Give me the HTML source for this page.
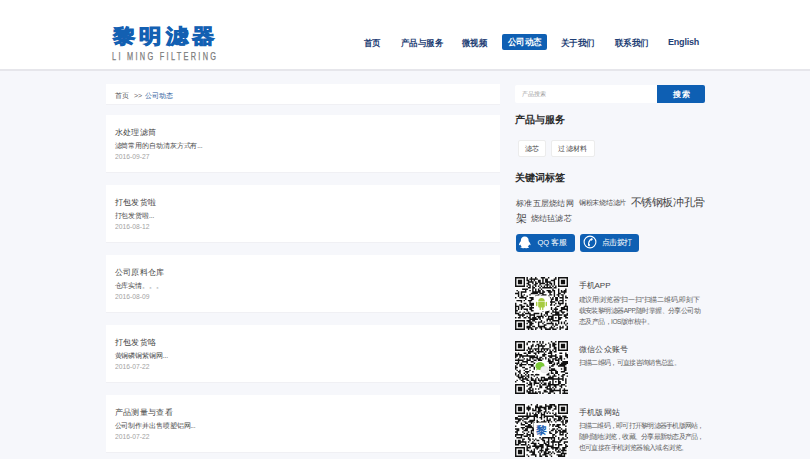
<!DOCTYPE html>
<html><head><meta charset="utf-8">
<style>
*{margin:0;padding:0;box-sizing:border-box}
html,body{width:810px;height:459px;overflow:hidden}
body{background:#f6f7fb;font-family:"Liberation Sans",sans-serif;position:relative;color:#333}
.a{position:absolute;white-space:nowrap;line-height:1}
#hdr{position:absolute;left:0;top:0;width:810px;height:71px;background:#fff;border-bottom:2px solid #e6e6eb}
.logo{left:113px;top:25.5px;font-size:20px;font-weight:bold;color:#1360b2;letter-spacing:3.6px;-webkit-text-stroke:0.9px #1360b2;transform:scaleX(1.12);transform-origin:0 0}
.logosub{left:112px;top:51.5px;font-size:10.2px;color:#7c7c7c;-webkit-text-stroke:0.25px #7c7c7c;letter-spacing:3.2px;transform:scaleX(0.72);transform-origin:0 0}
.nav{top:38.5px;font-size:9px;font-weight:bold;color:#1f3f75;transform:scaleX(0.94);transform-origin:0 0}
.navon{position:absolute;left:502px;top:34px;width:45px;height:16px;background:#0e5fb3;border-radius:2px}
.navon span{position:absolute;left:5.5px;top:4px;font-size:9px;font-weight:bold;color:#fff;line-height:1;white-space:nowrap;transform:scaleX(0.94);transform-origin:0 0}
.card{position:absolute;left:106px;width:394px;background:#fff;box-shadow:0 1px 0 #f0f0f4}
.t{left:8.5px;font-size:8px;color:#444;letter-spacing:0.4px}
.d{left:8.5px;font-size:6.5px;color:#4a4a4a;letter-spacing:-0.1px}
.dt{left:8.5px;font-size:8px;color:#a3a3a3;transform:scaleX(0.84);transform-origin:0 0}
.side{color:#333}
.h{font-size:10px;font-weight:bold;color:#2a2a2a}
.tag{position:absolute;top:140px;height:17px;background:#fff;border:1px solid #ececec;border-radius:2px;font-size:7px;color:#444;line-height:15px;text-align:center;letter-spacing:0.3px}
.btn{position:absolute;top:233.5px;width:59px;height:18px;background:#0e5fb3;border-radius:3px}
.qr{position:absolute;left:515px;width:53px;height:53px;background:#fff}
.qt{left:578.5px;font-size:8px;color:#444}
.qd{left:578.5px;font-size:6.5px;color:#5e5e5e;line-height:11px;letter-spacing:-0.2px}
</style></head><body>
<div id="hdr"></div>
<div class="a logo">黎明滤器</div>
<div class="a logosub">LI MING FILTERING</div>
<div class="a nav" style="left:364px">首页</div>
<div class="a nav" style="left:401px">产品与服务</div>
<div class="a nav" style="left:462px">微视频</div>
<div class="navon"><span>公司动态</span></div>
<div class="a nav" style="left:561px">关于我们</div>
<div class="a nav" style="left:615px">联系我们</div>
<div class="a nav" style="left:668px;top:37.5px;font-size:9px;letter-spacing:-0.2px;transform:none">English</div>

<div class="card" style="top:84px;height:20px">
  <div class="a" style="left:8.5px;top:7.5px;font-size:7px;color:#555">首页</div><div class="a" style="left:28px;top:7.5px;font-size:7px;color:#666">&gt;&gt;</div><div class="a" style="left:38.5px;top:7.5px;font-size:7px;color:#2b5b9c;letter-spacing:0.3px">公司动态</div>
</div>

<div class="card" style="top:115px;height:57px">
  <div class="a t" style="top:13.5px">水处理滤筒</div>
  <div class="a d" style="top:28px">滤筒常用的自动清灰方式有...</div>
  <div class="a dt" style="top:37.8px">2016-09-27</div>
</div>
<div class="card" style="top:185px;height:57px">
  <div class="a t" style="top:13.5px">打包发货啦</div>
  <div class="a d" style="top:28px">打包发货啦...</div>
  <div class="a dt" style="top:37.8px">2016-08-12</div>
</div>
<div class="card" style="top:255px;height:57px">
  <div class="a t" style="top:13.5px">公司原料仓库</div>
  <div class="a d" style="top:28px">仓库实情。。。</div>
  <div class="a dt" style="top:37.8px">2016-08-09</div>
</div>
<div class="card" style="top:325px;height:57px">
  <div class="a t" style="top:13.5px">打包发货咯</div>
  <div class="a d" style="top:28px">黄铜磷铜紫铜网...</div>
  <div class="a dt" style="top:37.8px">2016-07-22</div>
</div>
<div class="card" style="top:395px;height:57px">
  <div class="a t" style="top:13.5px">产品测量与查看</div>
  <div class="a d" style="top:28px">公司制作并出售喷塑铝网...</div>
  <div class="a dt" style="top:37.8px">2016-07-22</div>
</div>

<!-- sidebar -->
<div style="position:absolute;left:515px;top:85px;width:142px;height:18px;background:#fff;border-radius:2px 0 0 2px"></div>
<div class="a" style="left:522px;top:91px;font-size:6px;color:#999">产品搜索</div>
<div style="position:absolute;left:657px;top:85px;width:48px;height:18px;background:#0e5fb3;border-radius:0 2px 2px 0"></div>
<div class="a" style="left:672.5px;top:90.5px;font-size:8px;font-weight:bold;color:#fff;letter-spacing:1.5px">搜索</div>

<div class="a h" style="left:515px;top:114.5px">产品与服务</div>
<div class="tag" style="left:518px;width:28px">滤芯</div>
<div class="tag" style="left:551px;width:44px">过滤材料</div>
<div class="a h" style="left:515px;top:172.5px">关键词标签</div>
<div class="a" style="left:516px;top:200px;font-size:8px;color:#484848;letter-spacing:0.3px">标准五层烧结网</div>
<div class="a" style="left:579px;top:200px;font-size:6.5px;color:#484848;letter-spacing:-0.3px">铜粉末烧结滤片</div>
<div class="a" style="left:630.5px;top:197px;font-size:10.5px;color:#444;letter-spacing:-0.4px">不锈钢板冲孔骨</div>
<div class="a" style="left:516px;top:212.5px;font-size:10.5px;color:#444">架</div>
<div class="a" style="left:530.5px;top:215px;font-size:8px;color:#484848;letter-spacing:0.3px">烧结毡滤芯</div>

<div class="btn" style="left:516px"></div>
<svg style="position:absolute;left:518px;top:236px" width="13.5" height="12.5" viewBox="0 0 14 15" preserveAspectRatio="none"><path fill="#fff" d="M7 0.5C4.3 0.5 3 2.6 3 5c0 .6 0 1-.3 1.5C1.8 7.8 1 9.2 1 10.5c0 .5.3.7.8.3l.6-.7c.3 1 .8 1.9 1.5 2.5-.8.3-1.4.8-1.2 1.3.2.6 1.6.8 3 .7l1.3-.2 1.3.2c1.4.1 2.8-.1 3-.7.2-.5-.4-1-1.2-1.3.7-.6 1.2-1.5 1.5-2.5l.6.7c.5.4.8.2.8-.3 0-1.3-.8-2.7-1.7-4C11 6 11 5.600 11 5c0-2.4-1.300-4.5-4-4.5z"/></svg>
<div class="a" style="left:537.5px;top:239px;font-size:7.5px;color:#fff">QQ 客服</div>
<div class="btn" style="left:580px"></div>
<svg style="position:absolute;left:582.5px;top:235px" width="14" height="14" viewBox="0 0 14 14"><circle cx="7" cy="7" r="5.9" fill="none" stroke="#fff" stroke-width="1.1"/><path fill="#fff" d="M8.6 2.9L10 4 8.7 5.7 7.8 5.3C6.9 6.3 6.3 7.700 6.200 9.100L7.100 9.500 6.600 11.300 5.200 11C4.400 8 5.600 4.700 8.600 2.900Z"/></svg>
<div class="a" style="left:601.5px;top:239px;font-size:7.5px;color:#fff;letter-spacing:-0.4px">点击拨打</div>

<div class="qr" style="top:277px"><svg width="53" height="53" viewBox="0 0 37 37" style="position:absolute;left:0;top:0"><rect width="37" height="37" fill="#fff"/><path fill="#111" d="M0 0h7v1h-7zM8 0h1v1h-1zM11 0h1v1h-1zM14 0h1v1h-1zM18 0h3v1h-3zM23 0h1v1h-1zM28 0h1v1h-1zM30 0h7v1h-7zM0 1h1v1h-1zM6 1h1v1h-1zM8 1h1v1h-1zM10 1h6v1h-6zM19 1h1v1h-1zM21 1h2v1h-2zM27 1h2v1h-2zM30 1h1v1h-1zM36 1h1v1h-1zM0 2h1v1h-1zM2 2h3v1h-3zM6 2h1v1h-1zM8 2h2v1h-2zM11 2h1v1h-1zM13 2h1v1h-1zM16 2h2v1h-2zM19 2h1v1h-1zM21 2h2v1h-2zM25 2h3v1h-3zM30 2h1v1h-1zM32 2h3v1h-3zM36 2h1v1h-1zM0 3h1v1h-1zM2 3h3v1h-3zM6 3h1v1h-1zM9 3h4v1h-4zM14 3h1v1h-1zM16 3h2v1h-2zM19 3h1v1h-1zM21 3h4v1h-4zM27 3h1v1h-1zM30 3h1v1h-1zM32 3h3v1h-3zM36 3h1v1h-1zM0 4h1v1h-1zM2 4h3v1h-3zM6 4h1v1h-1zM8 4h2v1h-2zM12 4h1v1h-1zM14 4h2v1h-2zM17 4h4v1h-4zM22 4h1v1h-1zM24 4h2v1h-2zM27 4h1v1h-1zM30 4h1v1h-1zM32 4h3v1h-3zM36 4h1v1h-1zM0 5h1v1h-1zM6 5h1v1h-1zM9 5h2v1h-2zM13 5h2v1h-2zM17 5h1v1h-1zM21 5h3v1h-3zM25 5h1v1h-1zM27 5h1v1h-1zM30 5h1v1h-1zM36 5h1v1h-1zM0 6h7v1h-7zM8 6h1v1h-1zM10 6h1v1h-1zM12 6h1v1h-1zM14 6h1v1h-1zM16 6h1v1h-1zM18 6h1v1h-1zM20 6h1v1h-1zM22 6h1v1h-1zM24 6h1v1h-1zM26 6h1v1h-1zM28 6h1v1h-1zM30 6h7v1h-7zM9 7h2v1h-2zM12 7h2v1h-2zM17 7h1v1h-1zM19 7h7v1h-7zM27 7h2v1h-2zM5 8h4v1h-4zM12 8h1v1h-1zM14 8h1v1h-1zM16 8h1v1h-1zM18 8h1v1h-1zM26 8h1v1h-1zM30 8h1v1h-1zM35 8h1v1h-1zM1 9h1v1h-1zM7 9h1v1h-1zM10 9h1v1h-1zM12 9h1v1h-1zM14 9h1v1h-1zM16 9h2v1h-2zM19 9h1v1h-1zM22 9h3v1h-3zM26 9h2v1h-2zM30 9h1v1h-1zM32 9h1v1h-1zM34 9h2v1h-2zM2 10h1v1h-1zM4 10h4v1h-4zM12 10h6v1h-6zM19 10h2v1h-2zM23 10h3v1h-3zM27 10h1v1h-1zM30 10h1v1h-1zM32 10h4v1h-4zM0 11h3v1h-3zM4 11h1v1h-1zM11 11h5v1h-5zM17 11h3v1h-3zM24 11h1v1h-1zM27 11h1v1h-1zM30 11h2v1h-2zM34 11h1v1h-1zM2 12h1v1h-1zM4 12h1v1h-1zM6 12h1v1h-1zM10 12h1v1h-1zM16 12h1v1h-1zM19 12h3v1h-3zM24 12h2v1h-2zM27 12h1v1h-1zM29 12h2v1h-2zM32 12h2v1h-2zM2 13h1v1h-1zM4 13h2v1h-2zM8 13h1v1h-1zM14 13h2v1h-2zM18 13h1v1h-1zM23 13h1v1h-1zM27 13h1v1h-1zM30 13h1v1h-1zM33 13h1v1h-1zM35 13h1v1h-1zM0 14h1v1h-1zM3 14h5v1h-5zM10 14h3v1h-3zM15 14h1v1h-1zM17 14h3v1h-3zM21 14h2v1h-2zM24 14h1v1h-1zM26 14h1v1h-1zM28 14h2v1h-2zM31 14h3v1h-3zM35 14h2v1h-2zM7 15h1v1h-1zM11 15h2v1h-2zM14 15h1v1h-1zM17 15h2v1h-2zM20 15h2v1h-2zM23 15h1v1h-1zM25 15h2v1h-2zM28 15h2v1h-2zM33 15h1v1h-1zM1 16h4v1h-4zM6 16h1v1h-1zM9 16h3v1h-3zM15 16h2v1h-2zM18 16h1v1h-1zM20 16h2v1h-2zM23 16h1v1h-1zM25 16h1v1h-1zM28 16h2v1h-2zM31 16h3v1h-3zM35 16h1v1h-1zM4 17h1v1h-1zM10 17h1v1h-1zM15 17h1v1h-1zM21 17h1v1h-1zM23 17h5v1h-5zM30 17h1v1h-1zM33 17h1v1h-1zM0 18h1v1h-1zM6 18h2v1h-2zM10 18h7v1h-7zM25 18h1v1h-1zM28 18h1v1h-1zM30 18h4v1h-4zM35 18h1v1h-1zM0 19h1v1h-1zM3 19h2v1h-2zM8 19h1v1h-1zM10 19h5v1h-5zM16 19h1v1h-1zM19 19h1v1h-1zM22 19h1v1h-1zM24 19h2v1h-2zM27 19h1v1h-1zM31 19h1v1h-1zM35 19h1v1h-1zM0 20h3v1h-3zM4 20h3v1h-3zM8 20h2v1h-2zM11 20h1v1h-1zM17 20h2v1h-2zM22 20h2v1h-2zM29 20h2v1h-2zM34 20h3v1h-3zM0 21h1v1h-1zM2 21h1v1h-1zM4 21h2v1h-2zM10 21h4v1h-4zM16 21h2v1h-2zM21 21h3v1h-3zM25 21h1v1h-1zM28 21h1v1h-1zM32 21h3v1h-3zM36 21h1v1h-1zM0 22h1v1h-1zM2 22h1v1h-1zM4 22h1v1h-1zM6 22h3v1h-3zM10 22h2v1h-2zM14 22h3v1h-3zM18 22h2v1h-2zM25 22h1v1h-1zM27 22h3v1h-3zM32 22h5v1h-5zM0 23h2v1h-2zM8 23h1v1h-1zM11 23h2v1h-2zM19 23h1v1h-1zM22 23h2v1h-2zM26 23h1v1h-1zM28 23h1v1h-1zM31 23h2v1h-2zM36 23h1v1h-1zM0 24h1v1h-1zM3 24h1v1h-1zM6 24h1v1h-1zM9 24h1v1h-1zM21 24h3v1h-3zM26 24h5v1h-5zM32 24h3v1h-3zM0 25h3v1h-3zM5 25h1v1h-1zM7 25h4v1h-4zM13 25h4v1h-4zM18 25h1v1h-1zM21 25h2v1h-2zM25 25h1v1h-1zM28 25h3v1h-3zM33 25h1v1h-1zM36 25h1v1h-1zM2 26h5v1h-5zM10 26h4v1h-4zM18 26h1v1h-1zM20 26h1v1h-1zM22 26h1v1h-1zM26 26h7v1h-7zM34 26h3v1h-3zM3 27h1v1h-1zM5 27h1v1h-1zM8 27h1v1h-1zM10 27h1v1h-1zM13 27h1v1h-1zM15 27h5v1h-5zM21 27h1v1h-1zM23 27h4v1h-4zM30 27h1v1h-1zM34 27h2v1h-2zM0 28h1v1h-1zM2 28h2v1h-2zM6 28h2v1h-2zM9 28h2v1h-2zM12 28h3v1h-3zM16 28h2v1h-2zM19 28h1v1h-1zM23 28h1v1h-1zM25 28h2v1h-2zM28 28h1v1h-1zM30 28h3v1h-3zM35 28h2v1h-2zM10 29h6v1h-6zM17 29h1v1h-1zM22 29h5v1h-5zM30 29h2v1h-2zM0 30h7v1h-7zM8 30h3v1h-3zM12 30h2v1h-2zM18 30h1v1h-1zM22 30h1v1h-1zM24 30h1v1h-1zM26 30h5v1h-5zM35 30h1v1h-1zM0 31h1v1h-1zM6 31h1v1h-1zM9 31h3v1h-3zM14 31h1v1h-1zM16 31h3v1h-3zM20 31h1v1h-1zM25 31h1v1h-1zM30 31h1v1h-1zM32 31h1v1h-1zM34 31h1v1h-1zM0 32h1v1h-1zM2 32h3v1h-3zM6 32h1v1h-1zM8 32h1v1h-1zM10 32h3v1h-3zM16 32h1v1h-1zM19 32h1v1h-1zM22 32h5v1h-5zM28 32h1v1h-1zM30 32h1v1h-1zM32 32h1v1h-1zM34 32h1v1h-1zM36 32h1v1h-1zM0 33h1v1h-1zM2 33h3v1h-3zM6 33h1v1h-1zM10 33h2v1h-2zM16 33h1v1h-1zM20 33h2v1h-2zM26 33h1v1h-1zM28 33h2v1h-2zM35 33h1v1h-1zM0 34h1v1h-1zM2 34h3v1h-3zM6 34h1v1h-1zM8 34h3v1h-3zM12 34h2v1h-2zM16 34h5v1h-5zM25 34h1v1h-1zM27 34h1v1h-1zM31 34h1v1h-1zM33 34h1v1h-1zM36 34h1v1h-1zM0 35h1v1h-1zM6 35h1v1h-1zM8 35h4v1h-4zM14 35h2v1h-2zM17 35h2v1h-2zM20 35h2v1h-2zM24 35h3v1h-3zM29 35h1v1h-1zM31 35h3v1h-3zM36 35h1v1h-1zM0 36h7v1h-7zM9 36h1v1h-1zM11 36h2v1h-2zM14 36h1v1h-1zM18 36h1v1h-1zM21 36h4v1h-4zM26 36h3v1h-3zM31 36h1v1h-1zM35 36h2v1h-2z"/></svg>
  <div style="position:absolute;left:18.5px;top:19px;width:16px;height:15px;background:#fff;border-radius:2px"></div>
  <svg style="position:absolute;left:21px;top:20px" width="11" height="13" viewBox="0 0 11 13"><path fill="#a6cc40" d="M2.2 4.6h6.6v5.2c0 .5-.3.8-.8.8H3c-.5 0-.8-.3-.8-.8z M2.2 4.1c.1-1.900 1.5-3.100 3.300-3.100s3.2 1.200 3.300 3.100z M.6 4.8c.4 0 .8.3.8.7v3c0 .4-.4.7-.8.7s-.6-.3-.6-.7v-3c0-.4.2-.7.6-.7z M10.4 4.8c.4 0 .6.3.6.7v3c0 .4-.2.7-.6.7s-.8-.3-.8-.7v-3c0-.4.4-.7.8-.7z M3.6 10.4h1.3v2c0 .4-.3.6-.65.6s-.65-.2-.65-.6z M6.1 10.4h1.300v2c0 .4-.3.6-.65.6s-.65-.2-.65-.6z"/></svg>
</div>
<div class="a qt" style="top:282px">手机APP</div>
<div class="a qd" style="top:293.5px">建议用浏览器“扫一扫”扫描二维码,即刻下<br><span style="letter-spacing:-0.53px">载安装黎明滤器APP,随时掌握、分享公司动</span><br><span style="letter-spacing:-0.48px">态及产品，IOS版审核中。</span></div>
<div class="qr" style="top:341px"><svg width="53" height="53" viewBox="0 0 37 37" style="position:absolute;left:0;top:0"><rect width="37" height="37" fill="#fff"/><path fill="#111" d="M0 0h7v1h-7zM9 0h2v1h-2zM12 0h2v1h-2zM15 0h1v1h-1zM17 0h1v1h-1zM19 0h1v1h-1zM25 0h1v1h-1zM28 0h1v1h-1zM30 0h7v1h-7zM0 1h1v1h-1zM6 1h1v1h-1zM8 1h1v1h-1zM17 1h1v1h-1zM19 1h1v1h-1zM23 1h1v1h-1zM26 1h2v1h-2zM30 1h1v1h-1zM36 1h1v1h-1zM0 2h1v1h-1zM2 2h3v1h-3zM6 2h1v1h-1zM8 2h1v1h-1zM12 2h1v1h-1zM15 2h2v1h-2zM18 2h1v1h-1zM21 2h1v1h-1zM24 2h1v1h-1zM26 2h3v1h-3zM30 2h1v1h-1zM32 2h3v1h-3zM36 2h1v1h-1zM0 3h1v1h-1zM2 3h3v1h-3zM6 3h1v1h-1zM11 3h2v1h-2zM14 3h1v1h-1zM16 3h5v1h-5zM24 3h1v1h-1zM26 3h2v1h-2zM30 3h1v1h-1zM32 3h3v1h-3zM36 3h1v1h-1zM0 4h1v1h-1zM2 4h3v1h-3zM6 4h1v1h-1zM9 4h1v1h-1zM11 4h1v1h-1zM16 4h1v1h-1zM19 4h1v1h-1zM24 4h1v1h-1zM27 4h2v1h-2zM30 4h1v1h-1zM32 4h3v1h-3zM36 4h1v1h-1zM0 5h1v1h-1zM6 5h1v1h-1zM9 5h3v1h-3zM13 5h4v1h-4zM18 5h6v1h-6zM27 5h2v1h-2zM30 5h1v1h-1zM36 5h1v1h-1zM0 6h7v1h-7zM8 6h1v1h-1zM10 6h1v1h-1zM12 6h1v1h-1zM14 6h1v1h-1zM16 6h1v1h-1zM18 6h1v1h-1zM20 6h1v1h-1zM22 6h1v1h-1zM24 6h1v1h-1zM26 6h1v1h-1zM28 6h1v1h-1zM30 6h7v1h-7zM9 7h4v1h-4zM15 7h5v1h-5zM21 7h1v1h-1zM24 7h2v1h-2zM27 7h2v1h-2zM0 8h1v1h-1zM2 8h1v1h-1zM6 8h2v1h-2zM9 8h2v1h-2zM13 8h2v1h-2zM16 8h1v1h-1zM20 8h1v1h-1zM23 8h3v1h-3zM31 8h2v1h-2zM35 8h1v1h-1zM0 9h5v1h-5zM8 9h1v1h-1zM14 9h1v1h-1zM19 9h3v1h-3zM25 9h1v1h-1zM28 9h1v1h-1zM35 9h2v1h-2zM0 10h2v1h-2zM3 10h11v1h-11zM15 10h1v1h-1zM19 10h2v1h-2zM23 10h6v1h-6zM31 10h2v1h-2zM35 10h2v1h-2zM0 11h1v1h-1zM3 11h1v1h-1zM5 11h1v1h-1zM10 11h6v1h-6zM17 11h2v1h-2zM21 11h1v1h-1zM24 11h2v1h-2zM28 11h2v1h-2zM31 11h2v1h-2zM36 11h1v1h-1zM2 12h1v1h-1zM6 12h1v1h-1zM8 12h1v1h-1zM10 12h1v1h-1zM12 12h1v1h-1zM15 12h3v1h-3zM19 12h1v1h-1zM21 12h1v1h-1zM23 12h1v1h-1zM26 12h3v1h-3zM30 12h3v1h-3zM34 12h1v1h-1zM0 13h6v1h-6zM8 13h3v1h-3zM13 13h2v1h-2zM16 13h3v1h-3zM23 13h2v1h-2zM26 13h1v1h-1zM28 13h3v1h-3zM32 13h1v1h-1zM2 14h1v1h-1zM5 14h4v1h-4zM11 14h2v1h-2zM15 14h2v1h-2zM18 14h1v1h-1zM20 14h1v1h-1zM22 14h5v1h-5zM30 14h1v1h-1zM33 14h4v1h-4zM0 15h3v1h-3zM4 15h1v1h-1zM8 15h1v1h-1zM13 15h4v1h-4zM19 15h7v1h-7zM27 15h1v1h-1zM29 15h2v1h-2zM32 15h5v1h-5zM1 16h1v1h-1zM3 16h5v1h-5zM9 16h4v1h-4zM15 16h3v1h-3zM19 16h2v1h-2zM22 16h1v1h-1zM26 16h2v1h-2zM29 16h1v1h-1zM31 16h5v1h-5zM0 17h1v1h-1zM3 17h2v1h-2zM11 17h2v1h-2zM14 17h3v1h-3zM18 17h3v1h-3zM22 17h2v1h-2zM25 17h2v1h-2zM30 17h5v1h-5zM0 18h2v1h-2zM5 18h2v1h-2zM10 18h1v1h-1zM13 18h4v1h-4zM18 18h1v1h-1zM21 18h4v1h-4zM34 18h2v1h-2zM0 19h1v1h-1zM7 19h2v1h-2zM13 19h1v1h-1zM15 19h2v1h-2zM18 19h6v1h-6zM25 19h3v1h-3zM32 19h1v1h-1zM34 19h2v1h-2zM1 20h1v1h-1zM3 20h1v1h-1zM6 20h1v1h-1zM10 20h1v1h-1zM14 20h1v1h-1zM16 20h3v1h-3zM21 20h8v1h-8zM34 20h2v1h-2zM2 21h2v1h-2zM7 21h3v1h-3zM12 21h1v1h-1zM16 21h4v1h-4zM21 21h1v1h-1zM25 21h1v1h-1zM28 21h2v1h-2zM32 21h3v1h-3zM0 22h1v1h-1zM3 22h1v1h-1zM6 22h1v1h-1zM8 22h1v1h-1zM15 22h3v1h-3zM19 22h2v1h-2zM22 22h2v1h-2zM25 22h2v1h-2zM28 22h2v1h-2zM35 22h2v1h-2zM0 23h1v1h-1zM2 23h1v1h-1zM4 23h1v1h-1zM7 23h1v1h-1zM9 23h1v1h-1zM11 23h2v1h-2zM14 23h3v1h-3zM22 23h2v1h-2zM27 23h1v1h-1zM30 23h1v1h-1zM33 23h2v1h-2zM1 24h2v1h-2zM4 24h3v1h-3zM8 24h2v1h-2zM13 24h1v1h-1zM24 24h1v1h-1zM26 24h3v1h-3zM32 24h2v1h-2zM36 24h1v1h-1zM2 25h4v1h-4zM7 25h1v1h-1zM9 25h1v1h-1zM11 25h1v1h-1zM15 25h1v1h-1zM18 25h3v1h-3zM23 25h4v1h-4zM30 25h1v1h-1zM33 25h1v1h-1zM3 26h1v1h-1zM5 26h4v1h-4zM11 26h2v1h-2zM14 26h1v1h-1zM16 26h1v1h-1zM18 26h1v1h-1zM20 26h14v1h-14zM35 26h1v1h-1zM1 27h1v1h-1zM4 27h2v1h-2zM8 27h2v1h-2zM11 27h4v1h-4zM16 27h7v1h-7zM26 27h1v1h-1zM30 27h1v1h-1zM33 27h1v1h-1zM35 27h1v1h-1zM0 28h1v1h-1zM5 28h2v1h-2zM10 28h1v1h-1zM13 28h2v1h-2zM17 28h1v1h-1zM19 28h1v1h-1zM24 28h1v1h-1zM26 28h1v1h-1zM28 28h1v1h-1zM30 28h2v1h-2zM35 28h1v1h-1zM8 29h1v1h-1zM10 29h2v1h-2zM13 29h4v1h-4zM18 29h1v1h-1zM20 29h2v1h-2zM23 29h2v1h-2zM26 29h1v1h-1zM30 29h2v1h-2zM35 29h1v1h-1zM0 30h7v1h-7zM9 30h3v1h-3zM13 30h1v1h-1zM17 30h1v1h-1zM19 30h3v1h-3zM23 30h8v1h-8zM32 30h3v1h-3zM0 31h1v1h-1zM6 31h1v1h-1zM8 31h1v1h-1zM11 31h1v1h-1zM15 31h1v1h-1zM17 31h2v1h-2zM22 31h3v1h-3zM27 31h2v1h-2zM31 31h2v1h-2zM35 31h1v1h-1zM0 32h1v1h-1zM2 32h3v1h-3zM6 32h1v1h-1zM10 32h2v1h-2zM17 32h2v1h-2zM21 32h2v1h-2zM24 32h1v1h-1zM26 32h1v1h-1zM28 32h1v1h-1zM32 32h1v1h-1zM0 33h1v1h-1zM2 33h3v1h-3zM6 33h1v1h-1zM9 33h2v1h-2zM12 33h1v1h-1zM14 33h1v1h-1zM16 33h1v1h-1zM22 33h4v1h-4zM27 33h1v1h-1zM31 33h1v1h-1zM34 33h1v1h-1zM0 34h1v1h-1zM2 34h3v1h-3zM6 34h1v1h-1zM8 34h1v1h-1zM10 34h3v1h-3zM20 34h2v1h-2zM24 34h8v1h-8zM33 34h4v1h-4zM0 35h1v1h-1zM6 35h1v1h-1zM8 35h3v1h-3zM12 35h1v1h-1zM14 35h1v1h-1zM16 35h2v1h-2zM20 35h3v1h-3zM24 35h3v1h-3zM31 35h1v1h-1zM34 35h1v1h-1zM0 36h7v1h-7zM9 36h7v1h-7zM17 36h1v1h-1zM19 36h1v1h-1zM23 36h2v1h-2zM27 36h1v1h-1zM31 36h1v1h-1zM33 36h4v1h-4z"/></svg>
  <div style="position:absolute;left:20px;top:20px;width:14px;height:13px;background:#fff;border-radius:3px"></div>
  <svg style="position:absolute;left:19px;top:19px" width="16" height="15" viewBox="0 0 16 15"><ellipse cx="6" cy="6" rx="4.6" ry="4" fill="#7ac836"/><path fill="#7ac836" d="M2.6 8.6l-.6 1.900 2-1z"/><ellipse cx="10.5" cy="9.6" rx="3.9" ry="3.3" fill="#f0f0f0" stroke="#d8d8d8" stroke-width=".4"/></svg>
</div>
<div class="a qt" style="top:345.5px;letter-spacing:0.4px">微信公众账号</div>
<div class="a qd" style="top:356.5px;letter-spacing:-0.66px">扫描二维码，可直接咨询销售总监。</div>
<div class="qr" style="top:403.5px"><svg width="53" height="53" viewBox="0 0 37 37" style="position:absolute;left:0;top:0"><rect width="37" height="37" fill="#fff"/><path fill="#111" d="M0 0h7v1h-7zM11 0h1v1h-1zM15 0h1v1h-1zM21 0h1v1h-1zM24 0h4v1h-4zM30 0h7v1h-7zM0 1h1v1h-1zM6 1h1v1h-1zM9 1h1v1h-1zM14 1h2v1h-2zM17 1h2v1h-2zM21 1h5v1h-5zM27 1h2v1h-2zM30 1h1v1h-1zM36 1h1v1h-1zM0 2h1v1h-1zM2 2h3v1h-3zM6 2h1v1h-1zM8 2h3v1h-3zM14 2h8v1h-8zM23 2h3v1h-3zM28 2h1v1h-1zM30 2h1v1h-1zM32 2h3v1h-3zM36 2h1v1h-1zM0 3h1v1h-1zM2 3h3v1h-3zM6 3h1v1h-1zM8 3h3v1h-3zM12 3h1v1h-1zM14 3h1v1h-1zM16 3h2v1h-2zM20 3h2v1h-2zM23 3h2v1h-2zM27 3h2v1h-2zM30 3h1v1h-1zM32 3h3v1h-3zM36 3h1v1h-1zM0 4h1v1h-1zM2 4h3v1h-3zM6 4h1v1h-1zM9 4h1v1h-1zM12 4h3v1h-3zM16 4h3v1h-3zM21 4h1v1h-1zM26 4h1v1h-1zM30 4h1v1h-1zM32 4h3v1h-3zM36 4h1v1h-1zM0 5h1v1h-1zM6 5h1v1h-1zM15 5h3v1h-3zM20 5h2v1h-2zM23 5h1v1h-1zM30 5h1v1h-1zM36 5h1v1h-1zM0 6h7v1h-7zM8 6h1v1h-1zM10 6h1v1h-1zM12 6h1v1h-1zM14 6h1v1h-1zM16 6h1v1h-1zM18 6h1v1h-1zM20 6h1v1h-1zM22 6h1v1h-1zM24 6h1v1h-1zM26 6h1v1h-1zM28 6h1v1h-1zM30 6h7v1h-7zM8 7h1v1h-1zM10 7h1v1h-1zM13 7h3v1h-3zM18 7h3v1h-3zM27 7h2v1h-2zM2 8h14v1h-14zM18 8h1v1h-1zM20 8h7v1h-7zM28 8h4v1h-4zM33 8h3v1h-3zM0 9h2v1h-2zM5 9h1v1h-1zM8 9h2v1h-2zM13 9h1v1h-1zM15 9h1v1h-1zM17 9h2v1h-2zM20 9h1v1h-1zM22 9h1v1h-1zM26 9h1v1h-1zM30 9h3v1h-3zM34 9h3v1h-3zM0 10h5v1h-5zM6 10h3v1h-3zM13 10h1v1h-1zM18 10h1v1h-1zM22 10h1v1h-1zM24 10h1v1h-1zM27 10h2v1h-2zM30 10h3v1h-3zM34 10h1v1h-1zM2 11h2v1h-2zM5 11h1v1h-1zM10 11h4v1h-4zM15 11h1v1h-1zM20 11h1v1h-1zM22 11h3v1h-3zM27 11h1v1h-1zM29 11h3v1h-3zM33 11h1v1h-1zM35 11h2v1h-2zM0 12h3v1h-3zM6 12h2v1h-2zM9 12h4v1h-4zM15 12h2v1h-2zM18 12h4v1h-4zM23 12h1v1h-1zM25 12h1v1h-1zM28 12h1v1h-1zM32 12h2v1h-2zM35 12h2v1h-2zM1 13h1v1h-1zM4 13h1v1h-1zM7 13h2v1h-2zM11 13h1v1h-1zM13 13h1v1h-1zM15 13h1v1h-1zM17 13h1v1h-1zM23 13h1v1h-1zM33 13h1v1h-1zM35 13h1v1h-1zM4 14h3v1h-3zM9 14h2v1h-2zM13 14h3v1h-3zM18 14h1v1h-1zM20 14h2v1h-2zM24 14h1v1h-1zM26 14h2v1h-2zM29 14h3v1h-3zM33 14h2v1h-2zM0 15h1v1h-1zM7 15h5v1h-5zM13 15h5v1h-5zM20 15h1v1h-1zM22 15h2v1h-2zM26 15h1v1h-1zM28 15h3v1h-3zM35 15h1v1h-1zM4 16h3v1h-3zM8 16h5v1h-5zM14 16h2v1h-2zM18 16h1v1h-1zM20 16h3v1h-3zM30 16h2v1h-2zM0 17h3v1h-3zM5 17h1v1h-1zM7 17h2v1h-2zM12 17h2v1h-2zM15 17h2v1h-2zM18 17h2v1h-2zM23 17h1v1h-1zM26 17h2v1h-2zM29 17h1v1h-1zM32 17h1v1h-1zM35 17h1v1h-1zM1 18h2v1h-2zM6 18h3v1h-3zM11 18h4v1h-4zM17 18h1v1h-1zM19 18h1v1h-1zM25 18h2v1h-2zM28 18h1v1h-1zM30 18h2v1h-2zM33 18h3v1h-3zM0 19h2v1h-2zM5 19h1v1h-1zM9 19h1v1h-1zM11 19h1v1h-1zM13 19h1v1h-1zM15 19h5v1h-5zM21 19h1v1h-1zM23 19h2v1h-2zM28 19h2v1h-2zM31 19h5v1h-5zM1 20h1v1h-1zM6 20h1v1h-1zM8 20h1v1h-1zM11 20h2v1h-2zM18 20h1v1h-1zM21 20h1v1h-1zM24 20h2v1h-2zM28 20h1v1h-1zM31 20h1v1h-1zM33 20h1v1h-1zM36 20h1v1h-1zM0 21h6v1h-6zM8 21h3v1h-3zM12 21h2v1h-2zM16 21h1v1h-1zM18 21h1v1h-1zM20 21h1v1h-1zM22 21h1v1h-1zM26 21h2v1h-2zM31 21h3v1h-3zM35 21h1v1h-1zM0 22h1v1h-1zM4 22h1v1h-1zM6 22h3v1h-3zM10 22h1v1h-1zM12 22h4v1h-4zM17 22h1v1h-1zM19 22h1v1h-1zM21 22h1v1h-1zM26 22h1v1h-1zM28 22h1v1h-1zM35 22h1v1h-1zM1 23h4v1h-4zM9 23h1v1h-1zM17 23h1v1h-1zM19 23h9v1h-9zM30 23h1v1h-1zM33 23h1v1h-1zM36 23h1v1h-1zM5 24h2v1h-2zM9 24h2v1h-2zM12 24h1v1h-1zM14 24h1v1h-1zM18 24h2v1h-2zM23 24h1v1h-1zM25 24h1v1h-1zM27 24h1v1h-1zM30 24h1v1h-1zM32 24h4v1h-4zM0 25h1v1h-1zM2 25h2v1h-2zM5 25h1v1h-1zM10 25h1v1h-1zM13 25h1v1h-1zM15 25h2v1h-2zM19 25h2v1h-2zM23 25h1v1h-1zM26 25h2v1h-2zM31 25h2v1h-2zM0 26h1v1h-1zM2 26h6v1h-6zM9 26h1v1h-1zM12 26h1v1h-1zM20 26h1v1h-1zM22 26h2v1h-2zM25 26h7v1h-7zM34 26h3v1h-3zM0 27h1v1h-1zM2 27h2v1h-2zM7 27h1v1h-1zM11 27h4v1h-4zM16 27h1v1h-1zM20 27h2v1h-2zM23 27h1v1h-1zM26 27h1v1h-1zM30 27h1v1h-1zM34 27h1v1h-1zM0 28h3v1h-3zM4 28h4v1h-4zM9 28h1v1h-1zM13 28h2v1h-2zM17 28h3v1h-3zM21 28h3v1h-3zM26 28h1v1h-1zM28 28h1v1h-1zM30 28h3v1h-3zM35 28h1v1h-1zM8 29h1v1h-1zM10 29h1v1h-1zM12 29h8v1h-8zM22 29h5v1h-5zM30 29h1v1h-1zM35 29h2v1h-2zM0 30h7v1h-7zM8 30h3v1h-3zM14 30h3v1h-3zM18 30h2v1h-2zM22 30h1v1h-1zM25 30h6v1h-6zM33 30h3v1h-3zM0 31h1v1h-1zM6 31h1v1h-1zM8 31h1v1h-1zM13 31h1v1h-1zM15 31h1v1h-1zM18 31h1v1h-1zM21 31h3v1h-3zM26 31h1v1h-1zM28 31h2v1h-2zM31 31h1v1h-1zM33 31h2v1h-2zM0 32h1v1h-1zM2 32h3v1h-3zM6 32h1v1h-1zM8 32h2v1h-2zM11 32h1v1h-1zM13 32h1v1h-1zM17 32h3v1h-3zM21 32h2v1h-2zM28 32h1v1h-1zM30 32h1v1h-1zM32 32h4v1h-4zM0 33h1v1h-1zM2 33h3v1h-3zM6 33h1v1h-1zM10 33h4v1h-4zM16 33h1v1h-1zM18 33h1v1h-1zM20 33h2v1h-2zM23 33h2v1h-2zM26 33h1v1h-1zM29 33h3v1h-3zM33 33h1v1h-1zM0 34h1v1h-1zM2 34h3v1h-3zM6 34h1v1h-1zM12 34h2v1h-2zM17 34h1v1h-1zM20 34h4v1h-4zM25 34h1v1h-1zM27 34h1v1h-1zM32 34h4v1h-4zM0 35h1v1h-1zM6 35h1v1h-1zM8 35h1v1h-1zM11 35h4v1h-4zM17 35h1v1h-1zM19 35h3v1h-3zM24 35h1v1h-1zM29 35h4v1h-4zM34 35h1v1h-1zM0 36h7v1h-7zM9 36h1v1h-1zM14 36h1v1h-1zM17 36h2v1h-2zM21 36h2v1h-2zM25 36h1v1h-1zM30 36h5v1h-5z"/></svg>
  <div style="position:absolute;left:18.5px;top:19.5px;width:15px;height:14px;background:#fff"></div>
  <div class="a" style="left:20.5px;top:21px;font-size:11px;font-weight:bold;color:#1e62b4">黎</div>
</div>
<div class="a qt" style="top:408.5px;letter-spacing:0.4px">手机版网站</div>
<div class="a qd" style="top:419.5px;letter-spacing:-0.75px">扫描二维码，即可打开黎明滤器手机版网站，<br>随时随地浏览，收藏、分享最新动态及产品，<br><span style="letter-spacing:-0.6px">也可直接在手机浏览器输入域名浏览。</span></div>
</body></html>
